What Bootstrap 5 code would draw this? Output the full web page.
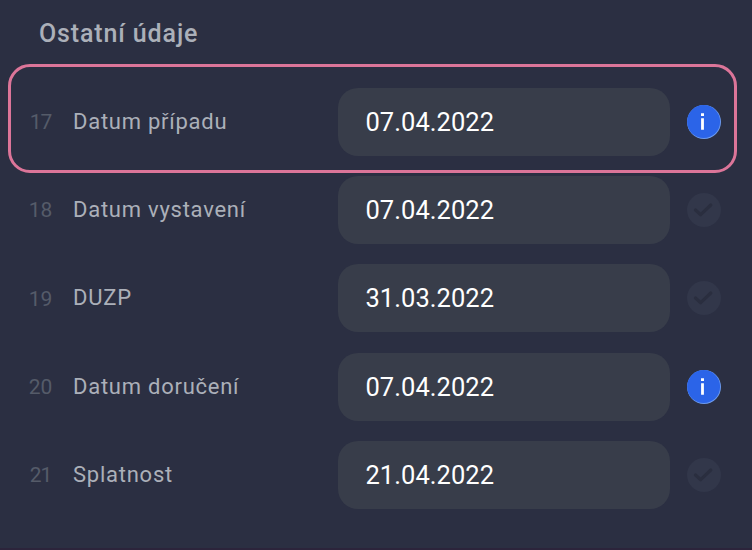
<!DOCTYPE html>
<html lang="cs">
<head>
<meta charset="utf-8">
<meta name="viewport" content="width=device-width, initial-scale=1">
<title>Ostatní údaje</title>
<link href="https://cdn.jsdelivr.net/npm/bootstrap@5.3.0/dist/css/bootstrap.min.css" rel="stylesheet">
<style>
body{background:#2b2f42;color:#abb0b9;font-family:Roboto,"Liberation Sans",sans-serif;height:550px;border-bottom:2px solid #2c243b}
.section-title{font-size:25px;line-height:30px;font-weight:500;letter-spacing:.87px;padding:19px 0 0 39px;margin-bottom:39px}
.fields{gap:20.2px}
.field-row{height:68px;padding-right:31px}
.field-no{width:52px;padding-top:2px;font-size:21px;letter-spacing:-.2px;color:#555b69}
.field-no.tight{letter-spacing:-1.2px;padding-right:1px}
.field-label{width:265px;margin-left:21px;padding-bottom:1px;font-size:22px;letter-spacing:.75px}
.form-control.date-field,.form-control.date-field:focus{width:332px;height:68px;border:0;border-radius:20px;background:#383d4a;color:#fff;padding:0 27px 0 27.5px;font-size:25.5px;letter-spacing:.04px;box-shadow:none}
.status-icon{width:34px;height:34px}
.selected-row::after{content:"";position:absolute;inset:-24px 15px -17px 8px;border:3px solid #dc7599;border-radius:22px;pointer-events:none}
</style>
</head>
<body class="overflow-hidden">
<svg class="d-none" xmlns="http://www.w3.org/2000/svg">
<symbol id="info" viewBox="0 0 34 34"><circle cx="17" cy="17" r="17" fill="#6c9bf0"/><circle cx="16.6" cy="16.6" r="16.5" fill="#2b64e8"/><path d="M14 8.3h3v2.8h-3zM14.1 13.3h2.8v11.5h-2.8z" fill="#fff"/></symbol>
<symbol id="check" viewBox="0 0 34 34"><circle cx="17" cy="17" r="17" fill="#32374a"/><path d="M8.5 17l5.2 4.7L23.8 12" fill="none" stroke="#2a2e3f" stroke-width="3.2" stroke-linecap="round" stroke-linejoin="round"/></symbol>
</svg>
<main>
<h1 class="section-title">Ostatní údaje</h1>
<form class="fields d-flex flex-column">
<div class="field-row selected-row position-relative d-flex align-items-center"><span class="field-no tight text-end">17</span><label class="field-label" for="f17">Datum případu</label><input class="form-control date-field" id="f17" value="07.04.2022"><svg class="status-icon ms-auto"><use href="#info"/></svg></div>
<div class="field-row d-flex align-items-center"><span class="field-no text-end">18</span><label class="field-label" for="f18">Datum vystavení</label><input class="form-control date-field" id="f18" value="07.04.2022"><svg class="status-icon ms-auto"><use href="#check"/></svg></div>
<div class="field-row d-flex align-items-center"><span class="field-no text-end">19</span><label class="field-label" for="f19">DUZP</label><input class="form-control date-field" id="f19" value="31.03.2022"><svg class="status-icon ms-auto"><use href="#check"/></svg></div>
<div class="field-row d-flex align-items-center"><span class="field-no text-end">20</span><label class="field-label" for="f20">Datum doručení</label><input class="form-control date-field" id="f20" value="07.04.2022"><svg class="status-icon ms-auto"><use href="#info"/></svg></div>
<div class="field-row d-flex align-items-center"><span class="field-no tight text-end">21</span><label class="field-label" for="f21">Splatnost</label><input class="form-control date-field" id="f21" value="21.04.2022"><svg class="status-icon ms-auto"><use href="#check"/></svg></div>
</form>
</main>
<script src="https://cdn.jsdelivr.net/npm/bootstrap@5.3.0/dist/js/bootstrap.bundle.min.js"></script>
</body>
</html>
